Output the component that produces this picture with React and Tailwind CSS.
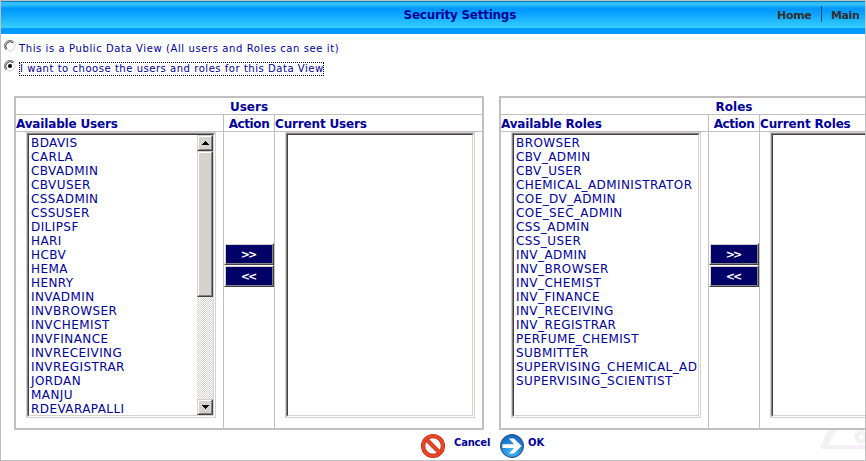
import React from 'react';

const USERS = ['BDAVIS', 'CARLA', 'CBVADMIN', 'CBVUSER', 'CSSADMIN', 'CSSUSER', 'DILIPSF', 'HARI', 'HCBV', 'HEMA', 'HENRY', 'INVADMIN', 'INVBROWSER', 'INVCHEMIST', 'INVFINANCE', 'INVRECEIVING', 'INVREGISTRAR', 'JORDAN', 'MANJU', 'RDEVARAPALLI'];
const ROLES = ['BROWSER', 'CBV_ADMIN', 'CBV_USER', 'CHEMICAL_ADMINISTRATOR', 'COE_DV_ADMIN', 'COE_SEC_ADMIN', 'CSS_ADMIN', 'CSS_USER', 'INV_ADMIN', 'INV_BROWSER', 'INV_CHEMIST', 'INV_FINANCE', 'INV_RECEIVING', 'INV_REGISTRAR', 'PERFUME_CHEMIST', 'SUBMITTER', 'SUPERVISING_CHEMICAL_AD', 'SUPERVISING_SCIENTIST'];

function Bevel({ className = '', children }) {
  return (
    <div className={`box-border border border-t-[#d6d3ce] border-l-[#d6d3ce] border-r-[#424142] border-b-[#424142] ${className}`}>
      <div className="flex h-full w-full items-center justify-center border border-t-white border-l-white border-r-[#848284] border-b-[#848284] bg-[#d6d3ce]">
        {children}
      </div>
    </div>
  );
}

function Scrollbar() {
  return (
    <div className="flex h-[280px] w-4 shrink-0 flex-col bg-[#e9e7e3] bg-[repeating-conic-gradient(#d6d3ce_0%_25%,#ffffff_0%_50%)] bg-[length:2px_2px]">
      <Bevel className="h-4 w-4">
        <svg width="7" height="4" shapeRendering="crispEdges"><path d="M3 0h1v1h1v1h1v1h1v1H0V3h1V2h1V1h1z" /></svg>
      </Bevel>
      <Bevel className="h-[146px] w-4" />
      <div className="flex-1" />
      <Bevel className="h-4 w-4">
        <svg width="7" height="4" shapeRendering="crispEdges"><path d="M0 0h7v1H6v1H5v1H4v1H3V3H2V2H1V1H0z" /></svg>
      </Bevel>
    </div>
  );
}

function ListBox({ items = [], scroll }) {
  return (
    <div className="h-[286px] w-[190px] border border-[#d6d3ce]">
      <div className="h-full border border-t-[#848284] border-l-[#848284] border-r-white border-b-white">
        <div className="flex h-full border border-t-[#424142] border-l-[#424142] border-r-[#d6d3ce] border-b-[#d6d3ce] bg-white">
          <ul className="min-w-0 flex-1 overflow-hidden pl-[2px] pt-px text-[12px] leading-[14px] tracking-[0.42px]">
            {items.map((t) => <li key={t} className="h-[14px] whitespace-nowrap">{t}</li>)}
          </ul>
          {scroll && <Scrollbar />}
        </div>
      </div>
    </div>
  );
}

function MoveButton({ children }) {
  return (
    <button className="block h-[22px] w-[50px] border border-t-white border-l-white border-r-[#424142] border-b-[#424142]">
      <span className="flex h-5 w-full items-center justify-center border border-t-[#d6d3ce] border-l-[#d6d3ce] border-r-[#848284] border-b-[#848284] bg-[#000066] pr-[2px] text-[11px] font-bold leading-none tracking-[-2px] text-white">{children}</span>
    </button>
  );
}

function Panel({ kind, items, scroll }) {
  const head = 'h-[17px] overflow-hidden whitespace-nowrap border-b border-[#c0c0c0] text-[12px] font-bold leading-[18px]';
  return (
    <section className="h-[334px] w-[470px] shrink-0 border-2 border-[#c0c0c0]">
      <h2 className="h-[17px] border-b border-[#c0c0c0] text-center text-[12px] font-bold leading-[18px]">{kind}</h2>
      <div className="grid h-[313px] grid-cols-[208px_51px_207px]">
        <div className="border-r border-[#c0c0c0]">
          <h3 className={`${head} tracking-[-0.16px]`}>Available {kind}</h3>
          <div className="pl-[10px]"><ListBox items={items} scroll={scroll} /></div>
        </div>
        <div className="flex flex-col border-r border-[#c0c0c0]">
          <h3 className={`${head} text-center tracking-[-0.4px]`}>Action</h3>
          <div className="flex flex-col pt-[111px]">
            <MoveButton>&gt;&gt;</MoveButton>
            <MoveButton>&lt;&lt;</MoveButton>
          </div>
        </div>
        <div>
          <h3 className={`${head} tracking-[-0.16px]`}>Current {kind}</h3>
          <div className="pl-[10px]"><ListBox /></div>
        </div>
      </div>
    </section>
  );
}

function Radio({ checked }) {
  return (
    <svg width="12" height="12" viewBox="0 0 12 12" className="shrink-0">
      <circle cx="6" cy="6" r="5" fill="#fff" stroke="#d6d3ce" />
      <path d="M2 10A5.4 5.4 0 0 1 10 2" fill="none" stroke="#848284" />
      <path d="M2.8 9A4.4 4.4 0 0 1 9 2.8" fill="none" stroke="#424142" />
      {checked && <circle cx="6" cy="6" r="2.1" fill="#000" />}
    </svg>
  );
}

export default function App() {
  return (
    <div className="h-[461px] w-[866px] overflow-hidden border border-[#c0c0c0] bg-white font-['DejaVu_Sans',Verdana,sans-serif] text-[#000099]">
      <header className="grid h-[33px] grid-cols-[1fr_auto_1fr] border-b-[6px] border-[#0099ff] bg-[linear-gradient(to_bottom,#0882c8_0px,#0882c8_1px,#31beff_1px,#31beff_4px,#0099ff_7px,#0099ff_9px,#35cfff_27px)]">
        <div />
        <h1 className="ml-[61px] w-[120px] whitespace-nowrap pt-[5px] text-[12px] font-bold leading-[18px] tracking-[-0.25px]">Security Settings</h1>
        <nav className="flex justify-end pt-[5px] text-[11px] font-bold leading-[19px] text-[#313031]">
          <a className="w-[44px] tracking-[-0.3px]">Home</a>
          <span className="h-4 w-px bg-[#174879]" />
          <a className="w-[43px] pl-[9px] tracking-[-0.4px]">Main</a>
        </nav>
      </header>
      <form className="flex flex-col pl-[3px] pt-[6px] text-[10px]">
        <label className="flex h-5 items-start">
          <Radio />
          <span className="ml-[3px] whitespace-nowrap pt-[2px] leading-[13px] tracking-[0.6px]">This is a Public Data View (All users and Roles can see it)</span>
        </label>
        <label className="flex h-5 items-start">
          <Radio checked />
          <span className="ml-[3px] mt-[2px] h-[14px] w-[305px] whitespace-nowrap border border-dotted border-black leading-[12px] tracking-[0.54px]">I want to choose the users and roles for this Data View</span>
        </label>
      </form>
      <main className="mt-[16px] flex gap-[15px] pl-[13px]">
        <Panel kind="Users" items={USERS} scroll />
        <Panel kind="Roles" items={ROLES} />
      </main>
      <footer className="flex h-[30px] items-start pl-[419px] text-[10px] font-bold">
        <svg width="26" height="26" viewBox="0 0 26 26" className="mt-[3px]">
          <circle cx="13" cy="13" r="9.9" fill="#fff" stroke="#a52c18" strokeWidth="4.2" />
          <circle cx="13" cy="13" r="9.9" fill="none" stroke="#f04525" strokeWidth="3" />
          <path d="M6 6L20 20" stroke="#a52c18" strokeWidth="4" />
          <path d="M5.5 5.5L20.5 20.5" stroke="#f04525" strokeWidth="2.8" />
        </svg>
        <span className="ml-[8px] w-[45px] whitespace-nowrap pt-[6px] leading-[14px] tracking-[-0.2px]">Cancel</span>
        <svg width="26" height="26" viewBox="0 0 26 26" className="mt-[3px]">
          <defs><radialGradient id="okBlue" cx="50%" cy="75%" r="65%"><stop offset="0" stopColor="#42bdf7" /><stop offset="1" stopColor="#1769c6" /></radialGradient></defs>
          <circle cx="13" cy="13" r="11.5" fill="url(#okBlue)" stroke="#264a7b" />
          <path d="M3.5 11.3h11.5L10 5.5h5L22.5 13 15 20.5h-5l5-5.6H3.5z" fill="#fff" />
        </svg>
        <span className="ml-[3px] pt-[6px] leading-[14px]">OK</span>
        <svg width="45" height="20" className="ml-auto" viewBox="0 0 45 20">
          <path d="M8 0h9L9 13q-1 2 2 2h34v4H3q-4 0-2-4z" fill="#f5f0f5" />
          <circle cx="41" cy="7" r="4.5" fill="none" stroke="#f5f0f5" strokeWidth="4" />
        </svg>
      </footer>
    </div>
  );
}
